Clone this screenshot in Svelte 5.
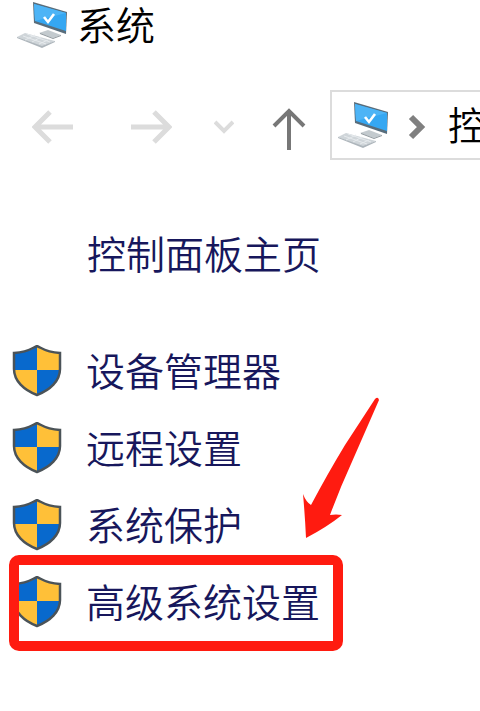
<script>
  const tasks = ['设备管理器', '远程设置', '系统保护', '高级系统设置'];
  const highlighted = '高级系统设置';
</script>

{#snippet computer()}
  <svg class="computer" width="50" height="46" viewBox="0 0 50 46" aria-hidden="true">
    <path d="M22 31l9-3 13 5-8 3z" fill="#c3cace" />
    <path d="M23 31l13 5 8-3v1l-8 3-13-5z" fill="#8f979c" />
    <path d="M0 35l8-4 30 8-13 6z" fill="#cfd5d9" />
    <path d="M0 35l25 9 13-5v1l-13 6L0 36z" fill="#adb5bb" />
    <path d="M6 34l23 8M10 32l23 8M8 38l10-5M15 40l9-5M22 42l9-4" stroke="#e6eaed" stroke-width="1" fill="none" />
    <path d="M16 0l34 10-1 22-32-11z" fill="#596d7b" />
    <path d="M17 2l32 9v18L18 19z" fill="#35a7f2" />
    <path d="M17 2l32 9-31 8z" fill="#4db4f6" />
    <path d="M27 15l4 5 6-8" stroke="#fff" stroke-width="2.6" fill="none" />
  </svg>
{/snippet}

{#snippet shield()}
  <svg class="shield" width="50" height="52" viewBox="0 0 50 52" aria-hidden="true">
    <path d="M25 1C20 6 11 7 2 8v17c0 11 11 21 23 25z" fill="#0869cd" />
    <path d="M25 1c5 5 14 6 23 7v17c0 11-11 21-23 25z" fill="#ffc038" />
    <path d="M2 25h23v25C12 44 2 35 2 25z" fill="#ffc038" />
    <path d="M25 25h23c0 10-10 19-23 25z" fill="#0869cd" />
    <path d="M25 1C20 3 17 7 2 8v16c0 12 10 21 23 26 13-5 23-14 23-26V8C33 7 30 3 25 1z" fill="none" stroke="#4b5358" stroke-width="2.5" />
  </svg>
{/snippet}

<main>
  <header>
    {@render computer()}
    <h1>系统</h1>
  </header>

  <nav class="toolbar" aria-label="导航">
    <button class="back" aria-label="后退" disabled>
      <svg width="42" height="34" viewBox="0 0 42 34"><path d="M41 17H3M18 2L3 17l15 15" stroke="#dcdcdc" stroke-width="5" fill="none" /></svg>
    </button>
    <button class="forward" aria-label="前进" disabled>
      <svg width="42" height="34" viewBox="0 0 42 34"><path d="M1 17h38M24 2l15 15-15 15" stroke="#dcdcdc" stroke-width="5" fill="none" /></svg>
    </button>
    <button class="recent" aria-label="最近位置" disabled>
      <svg width="20" height="14" viewBox="0 0 20 14"><path d="M1 2l9 9 9-9" stroke="#dcdcdc" stroke-width="4" fill="none" /></svg>
    </button>
    <button class="up" aria-label="向上">
      <svg width="34" height="42" viewBox="0 0 34 42"><path d="M17 42V3M2 18L17 3l15 15" stroke="#777" stroke-width="4" fill="none" /></svg>
    </button>
    <div class="address">
      {@render computer()}
      <svg class="separator" width="18" height="26" viewBox="0 0 18 26" aria-hidden="true"><path d="M3 3l10 10L3 23" stroke="#808080" stroke-width="6" fill="none" /></svg>
      <span>控</span>
    </div>
  </nav>

  <a class="home" href="#home">控制面板主页</a>

  <ul>
    {#each tasks as task}
      <li>
        <a href="#{task}">{@render shield()}<span>{task}</span></a>
        {#if task === highlighted}
          <div class="frame"></div>
          <svg class="pointer" width="80" height="144" viewBox="0 0 80 144" aria-hidden="true">
            <path d="M75 3q3-3 4 1L51 68Q40 92 30 119q6-1 12 0Q27 131 6 142Q5 120 3 98q3 8 8 11Q28 77 45 49z" fill="#ff1b10" />
          </svg>
        {/if}
      </li>
    {/each}
  </ul>
</main>

<style>
  :global(body) {
    margin: 0;
    background: #fff;
  }

  main {
    overflow: hidden;
    padding-bottom: 70px;
    font-family: 'Noto Sans CJK SC', sans-serif;
    font-size: 39px;
    font-weight: 350;
    line-height: 46px;
    color: #000;
  }

  svg {
    display: block;
    flex: none;
  }

  header {
    display: flex;
    align-items: center;
    gap: 10px;
    padding-left: 17px;
  }

  h1 {
    margin: 0;
    padding-bottom: 4px;
    font: inherit;
  }

  .toolbar {
    display: flex;
    align-items: center;
    margin-top: 40px;
    padding-left: 32px;
  }

  button {
    flex: none;
    margin-top: 4px;
    padding: 0;
    border: 0;
    background: none;
  }

  .forward {
    margin-left: 56px;
  }

  .recent {
    margin-left: 42px;
  }

  .up {
    margin: 8px 24px 0 38px;
  }

  .address {
    display: flex;
    flex: 1;
    align-items: center;
    min-width: 0;
    height: 66px;
    padding-left: 6px;
    border: 2px solid #dcdcdc;
    border-right: 0;
    overflow: hidden;
    white-space: nowrap;
  }

  .separator {
    margin: 4px 22px 0 20px;
  }

  span {
    padding-bottom: 4px;
  }

  a {
    color: #17175c;
    text-decoration: none;
  }

  .home {
    display: block;
    margin: 69px 0 0 87px;
  }

  ul {
    margin: 57px 0 0;
    padding: 0;
    list-style: none;
  }

  li {
    position: relative;
  }

  li a {
    display: flex;
    align-items: center;
    gap: 24px;
    height: 77px;
    padding-left: 12px;
  }

  .frame {
    position: absolute;
    top: -8px;
    left: 9px;
    box-sizing: border-box;
    width: 334px;
    height: 96px;
    border: 10px solid #ff1b10;
    border-radius: 10px;
    pointer-events: none;
  }

  .pointer {
    position: absolute;
    top: -167px;
    left: 300px;
    pointer-events: none;
  }
</style>
